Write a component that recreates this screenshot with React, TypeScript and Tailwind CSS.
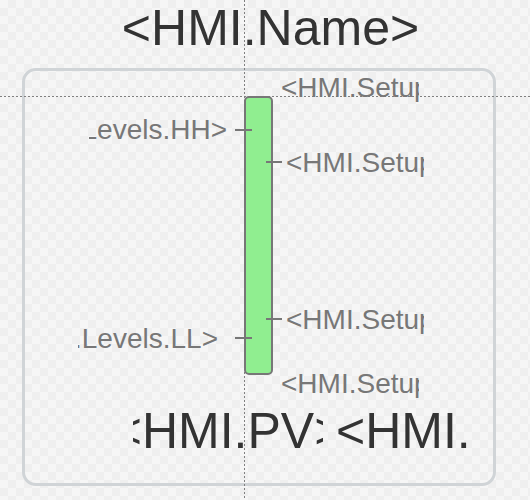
import React from "react";

const Label = ({ text, className }: { text: string; className: string }) => (
  <div className={`absolute flex h-[28px] items-center overflow-hidden whitespace-nowrap text-[28px] leading-[28px] text-[#777] ${className}`}>
    {text}
  </div>
);

export default function App() {
  return (
    <div className="relative h-[500px] w-[530px] overflow-hidden bg-[conic-gradient(#efefef_25%,#f6f6f6_0_50%,#efefef_0_75%,#f6f6f6_0)] bg-[length:16px_16px] font-['Liberation_Sans',Arial,sans-serif]">
      {/* guide lines */}
      <div className="absolute left-[244px] top-0 h-[500px] w-px bg-[repeating-linear-gradient(180deg,#808080_0_2px,transparent_2px_4px)]" />
      <div className="absolute left-0 top-[96px] h-px w-[530px] bg-[repeating-linear-gradient(90deg,#808080_0_2px,transparent_2px_4px)]" />

      <div className="flex justify-center pl-[11px] pt-[3px] text-[50px] leading-[50px] text-[#333] whitespace-nowrap">
        &lt;HMI.Name&gt;
      </div>

      <div className="ml-[22px] mt-[15px] flex h-[418px] w-[474px] flex-col rounded-[14px] border-[3px] border-[#d0d4d7]">
        <div className="relative flex h-[335px] w-full pl-[219px] pt-[25px]">
          <div className="relative z-10 h-[279px] w-[29px] rounded-[5px] border-2 border-[#777] bg-[#90ee90]">
            <div className="absolute -left-[11px] top-[31px] h-[2px] w-[17px] bg-[#777]" />
            <div className="absolute -left-[11px] top-[239px] h-[2px] w-[17px] bg-[#777]" />
            <div className="absolute left-[20px] top-[63px] h-[2px] w-[16px] bg-[#777]" />
            <div className="absolute left-[20px] top-[220px] h-[2px] w-[16px] bg-[#777]" />
          </div>

          <Label text="<HMI.Setup.Levels.HH>" className="left-[64px] w-[138px] top-[45px] justify-end" />
          <Label text="<HMI.Setup.Levels.LL>" className="left-[53px] w-[140px] top-[254px] justify-end" />
          <Label text="<HMI.Setup.Range.Max>" className="left-[256px] w-[138px] top-[3px]" />
          <Label text="<HMI.Setup.Levels.H>" className="left-[261px] w-[138px] top-[78px]" />
          <Label text="<HMI.Setup.Levels.L>" className="left-[261px] w-[138px] top-[235px]" />
          <Label text="<HMI.Setup.Range.Min>" className="left-[256px] w-[138px] top-[299px]" />
        </div>

        <div className="ml-[108px] flex gap-[13px] text-[50px] leading-[50px] text-[#333]">
          <div className="flex w-[190px] justify-center overflow-hidden whitespace-nowrap">
            <span>&lt;HMI.PV&gt;</span>
          </div>
          <div className="w-[134px] overflow-hidden whitespace-nowrap">
            &lt;HMI.Units&gt;
          </div>
        </div>
      </div>
    </div>
  );
}
